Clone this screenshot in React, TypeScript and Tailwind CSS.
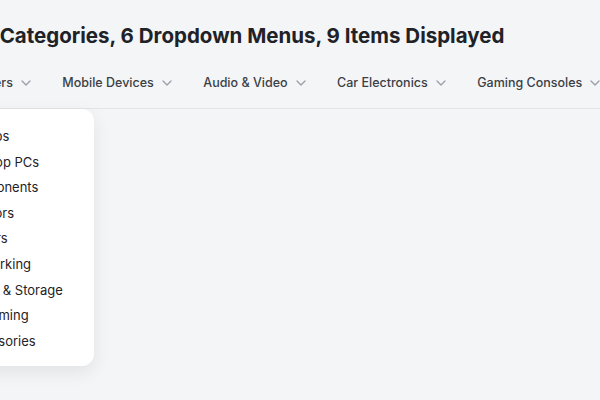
import { ChevronDown } from "lucide-react";

const menus = ["Computers", "Mobile Devices", "Audio & Video", "Car Electronics", "Gaming Consoles", "Smart Home"];

const computerItems = [
  "Laptops",
  "Desktop PCs",
  "Components",
  "Monitors",
  "Printers",
  "Networking",
  "Drives & Storage",
  "PC Gaming",
  "Accessories",
];

const NavMenu = ({ label, open }: { label: string; open?: boolean }) => {
  return (
    <div className="relative shrink-0">
      <button className="flex items-center gap-[5px] px-[14.25px] py-[15px] text-[12.5px] leading-5 font-medium text-[#3b3f45] whitespace-nowrap">
        {label}
        <ChevronDown size={16} strokeWidth={2} className="text-[#9aa0a8]" />
      </button>
      {open && (
        <div className="absolute left-[11.5px] top-full mt-[1px] w-[150px] rounded-xl bg-white shadow-[0_6px_18px_rgba(0,0,0,0.08)] px-4 pt-[15px] pb-3 z-10">
          {computerItems.map((item) => (
            <a key={item} href="#" className="block text-[13px] leading-[25.6px] text-[#1f2226] whitespace-nowrap">
              {item}
            </a>
          ))}
        </div>
      )}
    </div>
  );
};

const App = () => {
  return (
    <div
      className="w-[600px] h-[400px] overflow-hidden bg-[#f4f5f7]"
      style={{ fontFamily: "Inter, 'Noto Sans', sans-serif" }}
    >
      <h1 className="ml-[-18.5px] mt-[22px] text-[20.5px] leading-7 font-bold text-[#1f2226] whitespace-nowrap">
        6 Categories, 6 Dropdown Menus, 9 Items Displayed
      </h1>
      <nav className="mt-2 border-b border-[#e2e4e8]">
        <div className="flex ml-[-67.5px]">
          {menus.map((m, i) => (
            <NavMenu key={m} label={m} open={i === 0} />
          ))}
        </div>
      </nav>
    </div>
  );
};

export default App;
